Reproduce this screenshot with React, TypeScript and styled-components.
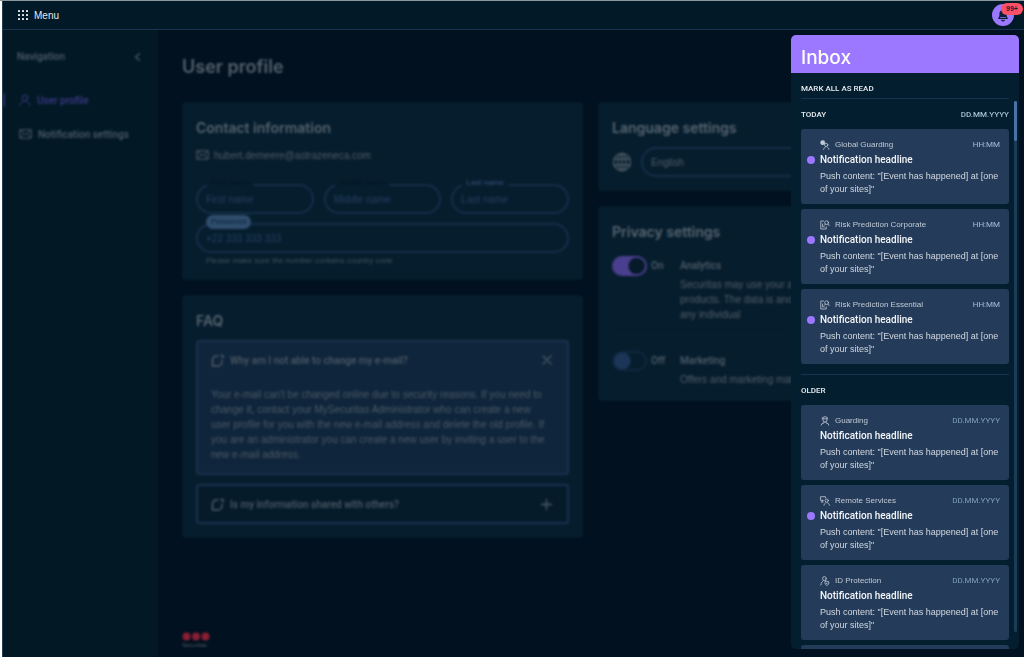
import React, { useState } from "react";
import styled, { createGlobalStyle } from "styled-components";

const Global = createGlobalStyle`
  * { box-sizing: border-box; }
  body { margin: 0; background: #fff; font-family: "Liberation Sans", Arial, sans-serif; color: #e8ebef; }
  button, input, select { font: inherit; color: inherit; background: none; border: 0; padding: 0; margin: 0; }
  h1, h2, h3, p, ul { margin: 0; padding: 0; list-style: none; }
  h1, h2 { font-family: Inter, sans-serif; }
  svg { display: block; flex: none; }
`;

const medium = `font-family: Roboto, sans-serif; font-weight: 500;`;

const Frame = styled.div`
  height: 100vh;
  padding: 1px 0 3px 2px;
  background: linear-gradient(#8b999f, #8b999f) top / 100% 1px no-repeat, #fff;
`;
const Shell = styled.div`
  position: relative;
  height: 100%;
  display: flex;
  flex-direction: column;
  background: #01111f;
  border-left: 1px solid #274050;
  overflow: hidden;
`;
const TopBar = styled.header`
  height: 29px;
  flex: none;
  display: flex;
  align-items: center;
  justify-content: space-between;
  padding: 0 10px 0 15px;
  background: #021a28;
  border-bottom: 1px solid #1b3350;
`;
const MenuButton = styled.button`
  display: flex;
  align-items: center;
  gap: 6px;
  font-size: 10px;
  color: #e4e8eb;
`;
const BellButton = styled.button`
  position: relative;
  width: 22px;
  height: 22px;
  border-radius: 50%;
  background: #9b78ff;
  color: #0a2036;
  display: grid;
  place-items: center;
`;
const Badge = styled.span`
  position: absolute;
  top: -1px;
  right: -9px;
  width: 22px;
  height: 12px;
  line-height: 12px;
  border-radius: 6px;
  background: #ff5065;
  color: #2a1a30;
  font-size: 7px;
  font-weight: 700;
  text-align: center;
`;

const Workspace = styled.div`
  flex: 1;
  min-height: 0;
  display: grid;
  grid-template-columns: 155px 1fr;
  color: #4d5b67;
`;
const Sidebar = styled.nav`
  background: #021925;
`;
const SidebarBody = styled.div`
  filter: blur(1px);
  font-size: 10px;
  ${medium}
`;
const SidebarHead = styled.div`
  display: flex;
  align-items: center;
  justify-content: space-between;
  padding: 21px 17px 26px 14px;
  line-height: 12px;
`;
const NavLink = styled.a<{ $active?: boolean }>`
  display: flex;
  align-items: center;
  gap: 6px;
  height: 14px;
  margin: 4px 0 20px;
  padding-left: 14px;
  text-decoration: none;
  border-left: 2px solid ${(p) => (p.$active ? "#2e2b6c" : "transparent")};
  color: ${(p) => (p.$active ? "#3d3888" : "#4d5b67")};
`;
const Main = styled.main`
  display: flex;
  flex-direction: column;
  padding: 24px 25px 8px 24px;
  filter: blur(1px);
`;
const Title = styled.h1`
  font-size: 18px;
  line-height: 26px;
  font-weight: 600;
  margin-bottom: 22px;
  color: #55616b;
`;
const Columns = styled.div`
  display: grid;
  grid-template-columns: 1fr 1fr;
  gap: 15px;
  align-items: start;
`;
const Column = styled.div`
  display: grid;
  gap: 15px;
  min-width: 0;
`;
const Card = styled.section`
  padding: 14px;
  border-radius: 4px;
  background: #061d2d;
`;
const CardTitle = styled.h2`
  font-size: 14px;
  line-height: 24px;
  font-weight: 600;
  color: #55636e;
`;
const MailRow = styled.p`
  display: flex;
  align-items: center;
  gap: 5px;
  height: 20px;
  margin: 5px 0 19px;
  font-size: 10px;
`;
const FieldRow = styled.div`
  display: grid;
  grid-template-columns: repeat(3, 1fr);
  gap: 10px;
  margin-bottom: 9px;
`;
const Field = styled.div`
  position: relative;
`;
const FieldLabel = styled.label<{ $tone: "hidden" | "plain" | "chip" }>`
  position: absolute;
  left: 10px;
  top: ${(p) => (p.$tone === "chip" ? "-8px" : "-7px")};
  padding: 0 5px;
  border-radius: 7px;
  font-size: 8px;
  ${medium}
  line-height: ${(p) => (p.$tone === "chip" ? "14px" : "12px")};
  background: ${(p) => (p.$tone === "chip" ? "#2f4c6c" : "#061d2d")};
  color: ${(p) => (p.$tone === "plain" ? "#2f4b6e" : p.$tone === "chip" ? "#132b47" : "#041827")};
`;
const Input = styled.input`
  width: 100%;
  height: 30px;
  padding: 0 8px;
  border: 2px solid #152f49;
  border-radius: 15px;
  font-size: 10px;
  &::placeholder { color: #254062; opacity: 1; }
`;
const Hint = styled.p`
  padding: 3px 10px 0;
  font-size: 8px;
  line-height: 10px;
  color: #42515c;
`;
const FaqItem = styled.div<{ $open?: boolean }>`
  border: 2px solid #17314e;
  border-radius: 3px;
  background: ${(p) => (p.$open ? "#0f253b" : "#061b2a")};
  margin-top: 9px;
  h2 + & { margin-top: 7px; }
`;
const FaqHead = styled.button`
  width: 100%;
  height: 36px;
  padding: 0 15px 0 13px;
  display: flex;
  align-items: center;
  gap: 6px;
  font-size: 10px;
  ${medium}
  text-align: left;
  span { flex: 1; }
`;
const FaqText = styled.p`
  padding: 9px 16px 11px 13px;
  font-size: 10px;
  line-height: 15px;
`;
const LanguageRow = styled.div`
  display: flex;
  align-items: center;
  gap: 9px;
  margin-top: 7px;
`;
const Select = styled.select`
  appearance: none;
  flex: 1;
  height: 30px;
  padding: 0 8px;
  border: 2px solid #152f49;
  border-radius: 15px;
  font-size: 10px;
`;
const Settings = styled.div`
  padding-top: 12px;
`;
const Setting = styled.div`
  display: grid;
  grid-template-columns: 35px 25px 1fr;
  column-gap: 4px;
  align-items: start;
  font-size: 10px;
  line-height: 15px;
  & + & { margin-top: 13px; padding-top: 15px; border-top: 1px solid #0a2133; }
`;
const Switch = styled.input`
  appearance: none;
  width: 35px;
  height: 20px;
  border-radius: 10px;
  border: 2px solid #10283f;
  padding: 0;
  background: radial-gradient(circle at 8px 8px, #1b3557 8px, transparent 9px);
  &:checked {
    border-color: #4a3f8e;
    background: radial-gradient(circle at 23px 8px, #061a29 8px, #4a3f8e 9px);
  }
`;
const State = styled.span`
  ${medium}
  padding-top: 2px;
`;
const SettingLabel = styled.label`
  display: block;
  ${medium}
  padding: 2px 0 4px;
`;
const Logo = styled.div`
  margin-top: auto;
  width: 28px;
  font-size: 6px;
  line-height: 8px;
  color: #4d5b67;
`;

const Inbox = styled.aside`
  position: absolute;
  top: 34px;
  right: 5px;
  bottom: 8px;
  width: 228px;
  display: flex;
  flex-direction: column;
  border-radius: 5px;
  background: #031f2f;
  overflow: hidden;
`;
const InboxHead = styled.header`
  flex: none;
  height: 38px;
  padding: 9px 10px 0;
  background: #9b78ff;
  color: #fff;
  h2 { font-size: 19px; line-height: 27px; font-weight: 500; }
`;
const MarkRead = styled.button`
  flex: none;
  height: 26px;
  margin: 0 10px;
  padding-top: 6px;
  border-bottom: 1px solid #16344f;
  font-size: 8px;
  ${medium}
  text-align: left;
`;
const InboxScroll = styled.div`
  flex: 1;
  min-height: 0;
  display: flex;
  padding: 0 2px 0 10px;
  gap: 5px;
`;
const Feed = styled.div`
  flex: 1;
  overflow: hidden;
`;
const Group = styled.section`
  & + & { margin-top: 10px; border-top: 1px solid #16344f; }
`;
const GroupHead = styled.h3`
  display: flex;
  justify-content: space-between;
  align-items: center;
  height: 30px;
  font-size: 8px;
  ${medium}
  time { color: #a9bfd4; }
`;
const Items = styled.ul`
  display: grid;
  gap: 5px;
`;
const Item = styled.li`
  position: relative;
  height: 75px;
  padding: 9px 9px 8px 19px;
  border-radius: 3px;
  background: #243c5a;
`;
const Meta = styled.div`
  display: flex;
  align-items: center;
  gap: 5px;
  font-size: 8px;
  line-height: 13px;
  color: #c2cad5;
`;
const Stamp = styled.time<{ $recent?: boolean }>`
  margin-left: auto;
  font-family: Roboto, sans-serif;
  color: ${(p) => (p.$recent ? "#a3bedb" : "#7f9dbd")};
`;
const Headline = styled.h4`
  margin: 2px 0 3px;
  font-size: 10px;
  line-height: 14px;
  ${medium}
  color: #f3f5f8;
`;
const Push = styled.p`
  font-size: 9px;
  line-height: 13px;
  color: #d2d8e0;
`;
const Unread = styled.span`
  position: absolute;
  left: 6px;
  top: 27px;
  width: 8px;
  height: 8px;
  border-radius: 50%;
  background: #9b78ff;
`;
const Track = styled.div`
  width: 3px;
  margin: 2px 0 17px;
  border-radius: 2px;
  background: #1c3b56;
`;
const Thumb = styled.div`
  height: 40px;
  border-radius: 2px;
  background: #4a72a6;
`;

const stroke = { fill: "none", stroke: "currentColor", strokeLinecap: "round", strokeLinejoin: "round" } as const;

const GridIcon = () => (
  <svg width="10" height="10" viewBox="0 0 10 10" fill="currentColor">
    {[0, 4, 8].map((y) => [0, 4, 8].map((x) => <rect key={`${x}${y}`} x={x} y={y} width="2" height="2" rx=".5" />))}
  </svg>
);
const BellIcon = () => (
  <svg width="12" height="14" viewBox="0 0 12 14" {...stroke} strokeWidth="1.2">
    <path fill="currentColor" d="M6 2.5a3 3 0 0 0-3 3V8.500h6v-3a3 3 0 0 0-3-3z" />
    <path d="M3 8.500L1.800 10.400h8.400L9 8.500M4.800 12.200L6 13l1.200-.8" />
  </svg>
);
const MailIcon = () => (
  <svg width="13" height="10" viewBox="0 0 13 10" {...stroke}>
    <rect x=".7" y=".7" width="11.600" height="8.600" rx="1" />
    <path d="M1 1.200l5.500 4.300L12 1.200M1.200 8.800l3.400-3.600M11.800 8.800L8.400 5.200" />
  </svg>
);
const UserIcon = () => (
  <svg width="12" height="12" viewBox="0 0 12 12" {...stroke}>
    <circle cx="6" cy="3.800" r="2.800" />
    <path d="M1 11.300c.6-2.600 2-3.600 3.600-4M11 11.300c-.6-2.600-2-3.600-3.600-4" />
  </svg>
);
const ChatIcon = () => (
  <svg width="13" height="13" viewBox="0 0 13 13" {...stroke} strokeWidth="1.500">
    <path d="M7 2H5.500a4 4 0 0 0-4 4v6H7a4 4 0 0 0 4-4V6.500M10 1.500h2V4" />
  </svg>
);
const GlobeIcon = () => (
  <svg width="20" height="20" viewBox="0 0 20 20" {...stroke} strokeWidth="1.300">
    <circle cx="10" cy="10" r="8.500" />
    <ellipse cx="10" cy="10" rx="4" ry="8.500" />
    <path d="M10 1.500v17M2 7h16M2 13h16" />
  </svg>
);
const Chevron = () => (
  <svg width="7" height="8" viewBox="0 0 7 8" {...stroke} strokeWidth="1.300"><path d="M5.500 .8L1.500 4l4 3.200" /></svg>
);
const Cross = () => (
  <svg width="10" height="10" viewBox="0 0 10 10" {...stroke} strokeWidth="1.300"><path d="M1 1l8 8M9 1L1 9" /></svg>
);
const Plus = () => (
  <svg width="11" height="11" viewBox="0 0 11 11" {...stroke} strokeWidth="1.300"><path d="M5.500 .5v10M.5 5.500h10" /></svg>
);

type Kind = "global" | "risk" | "guard" | "remote" | "id";
const shapes: Record<Kind, React.ReactNode> = {
  global: (
    <>
      <circle cx="2.700" cy="2.700" r="2.400" fill="currentColor" stroke="none" />
      <circle cx="6.200" cy="4.900" r="1.600" />
      <path d="M3.600 9.400c.3-1.500 1-2.100 1.900-2.500M8.900 9.400c-.3-1.500-1-2.100-1.900-2.500" />
    </>
  ),
  risk: (
    <>
      <path d="M3.600 1H.8v8h5.400V6.800M2.600 4v2.900h1.800" />
      <circle cx="6.600" cy="2.700" r="1.900" />
      <path d="M5.300 4.200L4.500 5.200M8 4.200L9.300 5.800" />
    </>
  ),
  guard: (
    <>
      <path d="M2.600 1.600L5 .6l2.400 1v1.200H2.600zM3 2.900v1.200a2 2 0 0 0 4 0V2.900M4 5.900v1L1.800 7.800 1.300 9.200M6 5.900v1l2.200.9.5 1.400" />
    </>
  ),
  remote: (
    <>
      <path d="M3.300 4.300H.5V.7h5v1.200M1.300 6h1.800M2.300 4.500v1.300" />
      <circle cx="6.700" cy="4.600" r="1.600" />
      <path d="M4 9.300c.3-1.500.9-2.200 1.900-2.600M9.400 9.300c-.3-1.500-.9-2.200-1.900-2.600" />
    </>
  ),
  id: (
    <>
      <circle cx="4.400" cy="2.500" r="1.900" />
      <path d="M.9 9c.2-2.200 1-3.400 2.300-4.200M5.200 4.600l.8.500" />
      <path d="M6.900 5.200l1.900.6v1.300c0 1.100-.8 1.900-1.900 2.300C5.800 9 5 8.200 5 7.100V5.800zM6.200 7.200l.5.600 1-1" />
    </>
  ),
};
const KindIcon = ({ kind }: { kind: Kind }) => (
  <svg width="10" height="10" viewBox="0 0 10 10" {...stroke} strokeWidth=".8">{shapes[kind]}</svg>
);

type Note = { kind: Kind; source: string; unread?: boolean };
const today: Note[] = [
  { kind: "global", source: "Global Guarding", unread: true },
  { kind: "risk", source: "Risk Prediction Corporate", unread: true },
  { kind: "risk", source: "Risk Prediction Essential", unread: true },
];
const older: Note[] = [
  { kind: "guard", source: "Guarding" },
  { kind: "remote", source: "Remote Services", unread: true },
  { kind: "id", source: "ID Protection" },
];

const NoteItem = ({ note, recent }: { note: Note; recent?: boolean }) => (
  <Item>
    {note.unread && <Unread />}
    <Meta>
      <KindIcon kind={note.kind} />
      {note.source}
      <Stamp $recent={recent}>{recent ? "HH:MM" : "DD.MM.YYYY"}</Stamp>
    </Meta>
    <Headline>Notification headline</Headline>
    <Push>Push content: "[Event has happened] at [one of your sites]"</Push>
  </Item>
);

export default function App() {
  const [analytics, setAnalytics] = useState(true);
  const [marketing, setMarketing] = useState(false);
  return (
    <Frame>
      <Global />
      <Shell>
        <TopBar>
          <MenuButton><GridIcon />Menu</MenuButton>
          <BellButton aria-label="Notifications"><BellIcon /><Badge>99+</Badge></BellButton>
        </TopBar>
        <Workspace>
          <Sidebar>
            <SidebarBody>
              <SidebarHead>Navigation<button aria-label="Collapse"><Chevron /></button></SidebarHead>
              <NavLink href="#profile" $active><UserIcon />User profile</NavLink>
              <NavLink href="#notifications"><MailIcon />Notification settings</NavLink>
            </SidebarBody>
          </Sidebar>
          <Main>
            <Title>User profile</Title>
            <Columns>
              <Column>
                <Card>
                  <CardTitle>Contact information</CardTitle>
                  <MailRow><MailIcon />hubert.demeere@astrazeneca.com</MailRow>
                  <FieldRow>
                    <Field><Input id="first" placeholder="First name" /><FieldLabel htmlFor="first" $tone="hidden">First name</FieldLabel></Field>
                    <Field><Input id="middle" placeholder="Middle name" /><FieldLabel htmlFor="middle" $tone="hidden">Middle name</FieldLabel></Field>
                    <Field><Input id="last" placeholder="Last name" /><FieldLabel htmlFor="last" $tone="plain">Last name</FieldLabel></Field>
                  </FieldRow>
                  <Field><Input id="phone" placeholder="+22 333 333 333" /><FieldLabel htmlFor="phone" $tone="chip">Password</FieldLabel></Field>
                  <Hint>Please make sure the number contains country code</Hint>
                </Card>
                <Card>
                  <CardTitle>FAQ</CardTitle>
                  <FaqItem $open>
                    <FaqHead><ChatIcon /><span>Why am I not able to change my e-mail?</span><Cross /></FaqHead>
                    <FaqText>
                      Your e-mail can't be changed online due to security reasons. If you need to change it, contact your
                      MySecuritas Administrator who can create a new user profile for you with the new e-mail address and
                      delete the old profile. If you are an administrator you can create a new user by inviting a user to
                      the new e-mail address.
                    </FaqText>
                  </FaqItem>
                  <FaqItem>
                    <FaqHead><ChatIcon /><span>Is my information shared with others?</span><Plus /></FaqHead>
                  </FaqItem>
                </Card>
              </Column>
              <Column>
                <Card>
                  <CardTitle>Language settings</CardTitle>
                  <LanguageRow>
                    <GlobeIcon />
                    <Select aria-label="Language"><option>English</option></Select>
                  </LanguageRow>
                </Card>
                <Card>
                  <CardTitle>Privacy settings</CardTitle>
                  <Settings>
                    <Setting>
                      <Switch id="analytics" type="checkbox" checked={analytics} onChange={() => setAnalytics(!analytics)} />
                      <State>{analytics ? "On" : "Off"}</State>
                      <div>
                        <SettingLabel htmlFor="analytics">Analytics</SettingLabel>
                        <p>Securitas may use your analytics<br />products. The data is anonymous<br />any individual</p>
                      </div>
                    </Setting>
                    <Setting>
                      <Switch id="marketing" type="checkbox" checked={marketing} onChange={() => setMarketing(!marketing)} />
                      <State>{marketing ? "On" : "Off"}</State>
                      <div>
                        <SettingLabel htmlFor="marketing">Marketing</SettingLabel>
                        <p>Offers and marketing material</p>
                      </div>
                    </Setting>
                  </Settings>
                </Card>
              </Column>
            </Columns>
            <Logo>
              <svg width="28" height="9" viewBox="0 0 28 9" fill="#8a1d34">
                <circle cx="4.500" cy="4.500" r="4" /><circle cx="14" cy="4.500" r="4" /><circle cx="23.500" cy="4.500" r="4" />
              </svg>
              Securitas
            </Logo>
          </Main>
        </Workspace>
        <Inbox>
          <InboxHead><h2>Inbox</h2></InboxHead>
          <MarkRead>MARK ALL AS READ</MarkRead>
          <InboxScroll>
            <Feed>
              <Group>
                <GroupHead>TODAY<time>DD.MM.YYYY</time></GroupHead>
                <Items>{today.map((n) => <NoteItem key={n.source} note={n} recent />)}</Items>
              </Group>
              <Group>
                <GroupHead>OLDER</GroupHead>
                <Items>
                  {older.map((n) => <NoteItem key={n.source} note={n} />)}
                  <Item />
                </Items>
              </Group>
            </Feed>
            <Track><Thumb /></Track>
          </InboxScroll>
        </Inbox>
      </Shell>
    </Frame>
  );
}
